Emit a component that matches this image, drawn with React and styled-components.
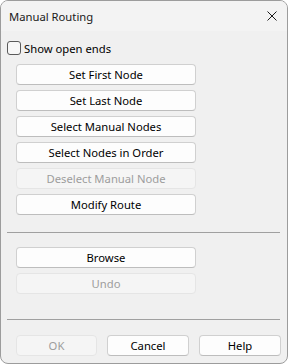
import React, { useState } from "react";
import styled, { createGlobalStyle } from "styled-components";

const GlobalStyle = createGlobalStyle`
  html, body {
    margin: 0;
    padding: 0;
    background: #ffffff;
  }
  body {
    font-family: "Noto Sans", "Open Sans", sans-serif;
    font-size: 11.25px;
    color: #000;
  }
`;

const Window = styled.div`
  width: 288px;
  height: 364px;
  box-sizing: border-box;
  border: 1px solid #9c9c9c;
  border-radius: 8px;
  background: #f0f0f0;
  overflow: hidden;
  display: flex;
  flex-direction: column;
`;

const TitleBar = styled.div`
  height: 30px;
  flex: none;
  background: #f3f3f3;
  display: flex;
  align-items: center;
  justify-content: space-between;
  padding: 0 10px 0 8px;
`;

const Title = styled.span`
  font-size: 11.25px;
  color: #1a1a1a;
`;

const CloseButton = styled.button`
  width: 10px;
  height: 10px;
  border: none;
  background: transparent;
  display: flex;
  align-items: center;
  justify-content: center;
  padding: 0;
`;

const Body = styled.div`
  flex: 1;
  display: flex;
  flex-direction: column;
  padding: 10px 6px 0 6px;
`;

const CheckRow = styled.label`
  display: flex;
  align-items: center;
  gap: 3px;
  height: 14px;
  padding-left: 0;
`;

const Box = styled.span`
  width: 12px;
  height: 12px;
  border: 1px solid #5a5a5a;
  border-radius: 3px;
  background: #f7f7f7;
  flex: none;
`;

const Group = styled.div`
  display: flex;
  flex-direction: column;
  gap: 5px;
  padding-left: 9px;
  margin-top: ${(p) => p.$top}px;
`;

const Button = styled.button`
  width: ${(p) => p.$w || 180}px;
  height: 21px;
  box-sizing: border-box;
  font-family: "Noto Sans", "Open Sans", sans-serif;
  font-size: 11.25px;
  line-height: 1;
  padding: 0;
  border: 1px solid ${(p) => (p.disabled ? "#e5e5e5" : "#d0d0d0")};
  border-bottom-color: ${(p) => (p.disabled ? "#e5e5e5" : "#bdbdbd")};
  border-radius: 4px;
  background: ${(p) => (p.disabled ? "#f5f5f5" : "#fdfdfd")};
  color: ${(p) => (p.disabled ? "#9d9d9d" : "#000")};
`;

const Separator = styled.hr`
  border: none;
  height: 1px;
  background: #a0a0a0;
  margin: ${(p) => p.$top}px 1px 0 0;
`;

const Footer = styled.div`
  display: flex;
  gap: 10px;
  padding-left: 9px;
  margin-top: 15px;
`;

function CloseIcon() {
  return (
    <svg width="10" height="10" viewBox="0 0 10 10">
      <path d="M0.5 0.5 L9.5 9.5 M9.5 0.5 L0.5 9.5" stroke="#1a1a1a" strokeWidth="1" />
    </svg>
  );
}

export default function App() {
  const [checked] = useState(false);
  return (
    <>
      <GlobalStyle />
      <Window>
        <TitleBar>
          <Title>Manual Routing</Title>
          <CloseButton>
            <CloseIcon />
          </CloseButton>
        </TitleBar>
        <Body>
          <CheckRow>
            <Box data-checked={checked} />
            <span>Show open ends</span>
          </CheckRow>
          <Group $top={9}>
            <Button>Set First Node</Button>
            <Button>Set Last Node</Button>
            <Button>Select Manual Nodes</Button>
            <Button>Select Nodes in Order</Button>
            <Button disabled>Deselect Manual Node</Button>
            <Button>Modify Route</Button>
          </Group>
          <Separator $top={17} />
          <Group $top={14}>
            <Button>Browse</Button>
            <Button disabled>Undo</Button>
          </Group>
          <Separator $top={25} />
          <Footer>
            <Button $w={81} disabled>OK</Button>
            <Button $w={82}>Cancel</Button>
            <Button $w={82}>Help</Button>
          </Footer>
        </Body>
      </Window>
    </>
  );
}
